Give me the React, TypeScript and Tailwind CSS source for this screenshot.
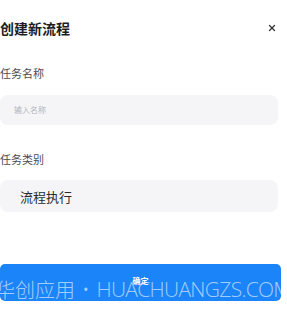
import { X } from "lucide-react";

const font = { fontFamily: '"Noto Sans CJK SC", "Noto Sans", sans-serif' };
const latin = { fontFamily: '"Open Sans", "Noto Sans", sans-serif' };

export default function App() {
  return (
    <div className="relative w-[287px] h-[312px] overflow-hidden bg-white" style={font}>
      <div className="flex flex-col pr-[9px]">
        <div className="flex items-center justify-between h-[54px] pt-[1px]">
          <h2 className="text-[14px] font-bold text-[#1d1d1f] leading-none">创建新流程</h2>
          <X size={10} strokeWidth={3} className="text-[#333] mr-[1px]" />
        </div>

        <label className="mt-[14px] text-[11px] leading-none text-[#4a4a4f]">任务名称</label>
        <div className="mt-[16px] h-[30px] rounded-[8px] bg-[#f5f5f7] flex items-center pl-[14px]">
          <span className="text-[8px] text-[#b4b4bb] leading-none">输入名称</span>
        </div>

        <label className="mt-[29px] text-[11px] leading-none text-[#4a4a4f]">任务类别</label>
        <div className="mt-[15px] h-[32px] rounded-[8px] bg-[#f5f5f7] flex items-center pl-[20px]">
          <span className="text-[13px] text-[#2a2a2e] leading-none">流程执行</span>
        </div>

        <button className="mt-[52px] h-[37px] w-[281px] rounded-[5px] bg-[#1a84f8] flex items-center justify-center">
          <span className="text-[8px] font-bold text-white leading-none -mt-[3px]">确定</span>
        </button>
      </div>

      {/* watermark */}
      <div className="absolute left-[-5px] top-[279px] flex items-center whitespace-nowrap text-[20px] font-light leading-none text-white/60 pointer-events-none">
        <span>华创应用</span>
        <span className="mx-[7px]" style={latin}>•</span>
        <span className="text-[21px] tracking-[-0.7px]" style={latin}>HUACHUANGZS.COM</span>
      </div>
    </div>
  );
}
